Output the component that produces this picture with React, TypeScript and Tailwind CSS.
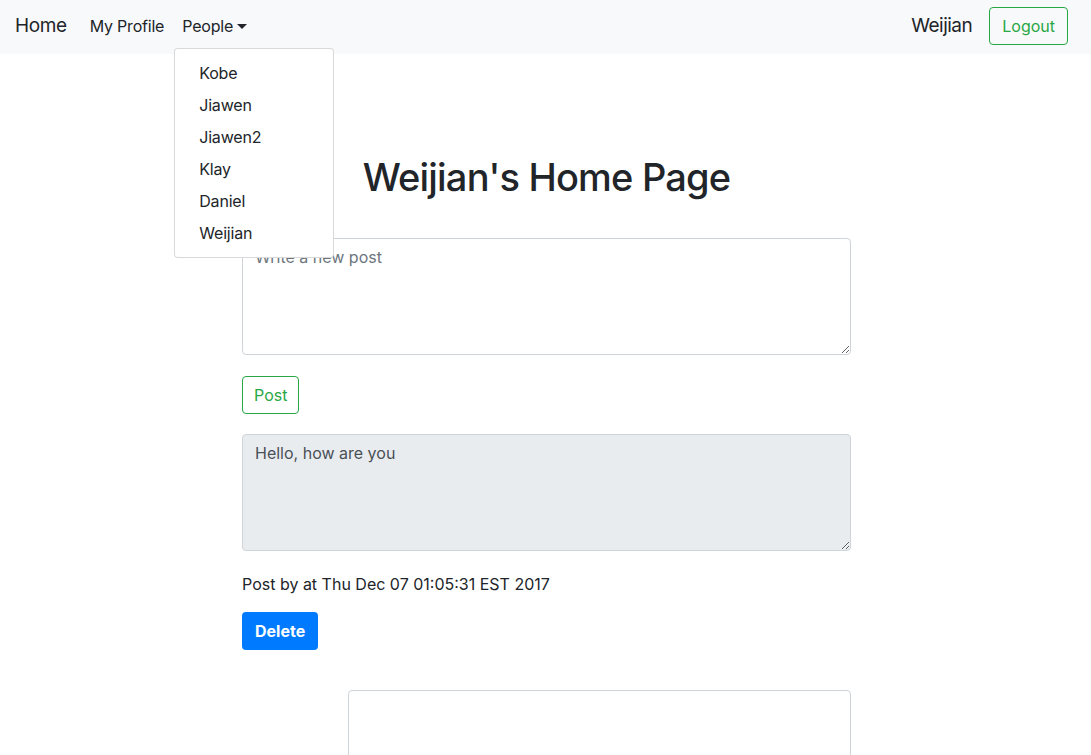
import { useState } from "react";

const people = ["Kobe", "Jiawen", "Jiawen2", "Klay", "Daniel", "Weijian"];

export default function App() {
  const [open] = useState(true);

  return (
    <div className="bg-white min-h-screen text-[#212529] font-['Inter','Noto_Sans',sans-serif]">
      {/* Navbar */}
      <nav className="relative flex items-center bg-[#f8f9fa] pr-[23px] pb-[2px] pl-[15px] h-[54px]">
        <a className="mr-[23px] text-[19px] tracking-[-0.4px]">Home</a>
        <a className="mr-[18px] text-[16px] tracking-[-0.2px]">My Profile</a>
        <div className="relative">
          <button className="flex items-center gap-[4px] text-[16px] tracking-[-0.2px]">
            People
            <span className="border-x-[5px] border-x-transparent border-t-[5px] border-t-[#212529] w-0 h-0" />
          </button>
          {open && (
            <div className="top-[34px] left-[-8px] z-10 absolute bg-white py-[8px] border border-black/15 rounded-[4px] w-[160px]">
              {people.map((p) => (
                <div key={p} className="px-[24px] py-[4px] text-[16px] leading-[24px] tracking-[-0.2px]">
                  {p}
                </div>
              ))}
            </div>
          )}
        </div>
        <div className="flex-1" />
        <span className="mr-[17px] text-[19px] tracking-[-0.5px]">Weijian</span>
        <button className="px-[12px] border border-[#28a745] rounded-[4px] h-[38px] text-[#28a745] text-[16px]">
          Logout
        </button>
      </nav>

      {/* Content */}
      <main className="flex flex-col items-center pl-[2px]">
        <h1 className="mt-[99px] font-medium text-[38px] leading-[48px] tracking-[-0.8px]">
          Weijian's Home Page
        </h1>
        <div className="flex flex-col mt-[37px] w-[609px]">
          <textarea
            placeholder="Write a new post"
            className="px-[12px] py-[6px] border border-[#ced4da] rounded-[4px] h-[117px] placeholder:text-[#6c757d] text-[16px] leading-[24px] outline-none"
          />
          <div className="mt-[21px]">
            <button className="px-[11px] border border-[#28a745] rounded-[4px] h-[38px] text-[#28a745] text-[16px]">
              Post
            </button>
          </div>
          <textarea
            disabled
            defaultValue="Hello, how are you"
            className="bg-[#e9ecef] mt-[20px] px-[12px] py-[6px] border border-[#ced4da] rounded-[4px] h-[117px] text-[#495057] text-[16px] leading-[24px] outline-none"
          />
          <p className="mt-[21px] text-[16px] leading-[24px]">Post by at Thu Dec 07 01:05:31 EST 2017</p>
          <div className="mt-[16px]">
            <button className="bg-[#007bff] px-[13px] rounded-[4px] h-[38px] font-bold text-[16px] text-white">
              Delete
            </button>
          </div>
          <div className="flex justify-end mt-[40px]">
            <textarea className="px-[12px] py-[6px] border border-[#ced4da] rounded-[4px] w-[503px] h-[117px] outline-none" />
          </div>
        </div>
      </main>
    </div>
  );
}
